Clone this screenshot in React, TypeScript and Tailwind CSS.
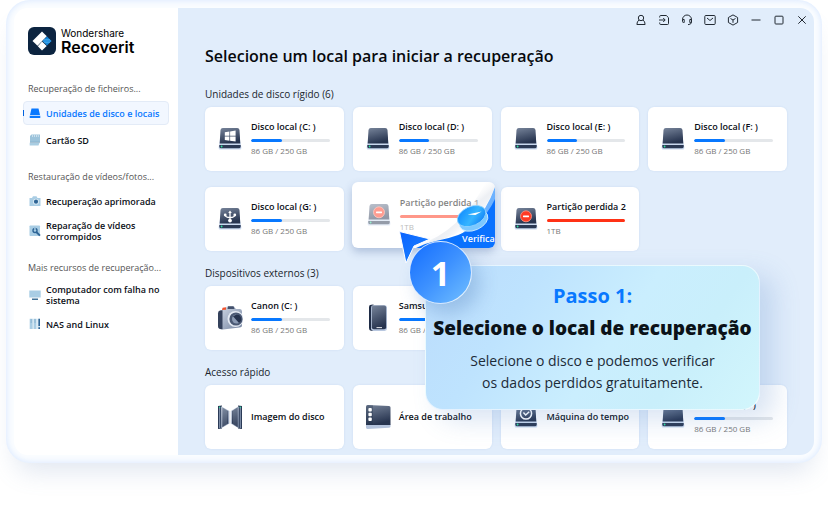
import type { ReactNode } from "react";

const ui = "font-['Open_Sans','Noto_Sans',sans-serif]";

type DriveMark = "windows" | "usb" | "minus" | "clock" | "none";

function Gradients() {
  return (
    <svg className="absolute size-0" aria-hidden="true">
      <defs>
        <linearGradient id="steel" x1="0" y1="0" x2="0.3" y2="1">
          <stop offset="0" stopColor="#77849a" />
          <stop offset="1" stopColor="#27344f" />
        </linearGradient>
        <linearGradient id="silver" x1="0" y1="0" x2="1" y2="1">
          <stop offset="0" stopColor="#d3dbe8" />
          <stop offset="1" stopColor="#7585a1" />
        </linearGradient>
        <linearGradient id="pointer" x1="0" y1="0" x2="1" y2="1">
          <stop offset="0" stopColor="#0a63ff" />
          <stop offset="1" stopColor="#1f86ff" />
        </linearGradient>
        <linearGradient id="disc" x1="0" y1="0" x2="1" y2="1">
          <stop offset="0" stopColor="#0b84ff" />
          <stop offset="0.55" stopColor="#35b5ff" />
          <stop offset="1" stopColor="#0a74f5" />
        </linearGradient>
        <linearGradient id="curl" gradientUnits="userSpaceOnUse" x1="98" y1="18" x2="122" y2="46">
          <stop offset="0.2" stopColor="#ffffff" stopOpacity="0" />
          <stop offset="0.55" stopColor="#dde2ea" stopOpacity="0.5" />
          <stop offset="0.85" stopColor="#ffffff" />
        </linearGradient>
      </defs>
    </svg>
  );
}

function DriveIcon({ mark = "none" }: { mark?: DriveMark }) {
  return (
    <svg viewBox="0 0 24 24" className="size-6 shrink-0" aria-hidden="true">
      <path d="M3.6 3Q3.8 1 5.8 1H18.2Q20.2 1 20.4 3L22.8 17.5Q24.2 22.6 22 22.6H2Q-.2 22.6 1.200 17.500Z" fill="#c9d8ee" />
      <path d="M2.500 3Q2.800 1 4.800 1H19.200Q21.200 1 21.500 3L22.300 16.600H1.700Z" fill="url(#steel)" />
      <path d="M1.300 17.900H22.700V19.800Q22.700 21.200 21.300 21.200H2.700Q1.300 21.200 1.300 19.800Z" fill="#2b3954" />
      <circle cx="3.600" cy="19.500" r="0.900" fill="#2fe0a0" />
      {mark === "windows" && (
        <path d="M6.800 5.200 11.400 4.500V8.800H6.800ZM12.100 4.400 17.600 3.600V8.800H12.100ZM6.800 9.500H11.400V13.700L6.800 13ZM12.100 9.500H17.600V14.600L12.100 13.800Z" fill="#fff" />
      )}
      {mark === "usb" && (
        <g fill="none" stroke="#fff" strokeWidth="1.300">
          <path d="M12 5V14M7.200 8Q7.400 10.500 12 10.500Q16.600 10.500 16.800 8" />
          <path d="M12 3.400 10.200 6H13.800Z" fill="#fff" stroke="none" />
          <circle cx="12" cy="13.600" r="1.900" fill="#fff" stroke="none" />
          <circle cx="7.200" cy="8" r="1.400" fill="#fff" stroke="none" />
          <circle cx="16.800" cy="8" r="1.400" fill="#fff" stroke="none" />
        </g>
      )}
      {mark === "minus" && (
        <g>
          <circle cx="12" cy="9.300" r="5.500" fill="#ff3b24" stroke="#ff9c8c" strokeWidth="0.800" />
          <rect x="9" y="8.500" width="6" height="1.700" rx="0.400" fill="#fff" />
        </g>
      )}
      {mark === "clock" && (
        <g fill="none" stroke="#fff" strokeWidth="1.500">
          <circle cx="12" cy="8.500" r="5.600" />
          <path d="M9.400 7.600 11.700 10 15.200 6.800" />
        </g>
      )}
    </svg>
  );
}

function CameraIcon() {
  return (
    <svg viewBox="0 0 26 26" className="h-[26px] w-[26px] shrink-0" aria-hidden="true">
      <path d="M1 8.500Q1 6 3 5.500L8 4 10 1.500H17L19 4H23Q25 4 25 6.500V20Q25 22.500 22.500 22.500L6 24.500Q1 24.500 1 21Z" fill="url(#silver)" />
      <path d="M1 8.500Q1 6 3 5.500L5.500 5.200V24.300Q1 24.500 1 21Z" fill="#34415b" />
      <path d="M5 5 5.600 2.800 9 2.300V4.700Z" fill="#f0522d" />
      <path d="M10.500 4 11 1.200H16.500L17.600 4Z" fill="#42506c" />
      <circle cx="18.500" cy="14" r="8" fill="#e3e9f2" />
      <circle cx="19" cy="14" r="6.600" fill="#4b5974" />
      <circle cx="19.600" cy="14" r="4.600" fill="#8b9ab3" />
      <path d="M19.600 9.400A4.600 4.600 0 0 1 22 18L16 11.200Z" fill="#26334e" />
    </svg>
  );
}

function ExternalDriveIcon() {
  return (
    <svg viewBox="0 0 24 28" className="h-7 w-6 shrink-0" aria-hidden="true">
      <path d="M3 3Q3 .8 5.200.8L7.500.6V27L5 26.800Q3 26.500 3 24Z" fill="#1e2b45" />
      <rect x="5" y="1.200" width="16" height="25.800" rx="2.400" fill="#b9c8e0" />
      <rect x="5.800" y="1.600" width="14.400" height="23.600" rx="2" fill="url(#steel)" />
      <rect x="10.500" y="23.200" width="5.500" height="0.900" fill="#fff" />
    </svg>
  );
}

function DiskImageIcon() {
  return (
    <svg viewBox="0 0 24 24" className="size-6 shrink-0" aria-hidden="true">
      <path d="M0 1 4 .5V23.500L0 24ZM24 1 20 .5V23.500L24 24Z" fill="#2a3a56" />
      <path d="M3.200 1.200 11.300 6V18.500L3.200 23.200Z" fill="url(#silver)" />
      <path d="M20.800 1.200 12.700 6V18.500L20.800 23.200Z" fill="url(#silver)" />
      <path d="M4.400 2.500 10 6V18.500L4.400 22ZM19.600 2.500 14 6V18.500L19.600 22Z" fill="url(#steel)" />
      <path d="M6 3.500V21M8 5V20M16 5V20M18 3.500V21" stroke="#9eabc0" strokeWidth="0.400" />
      <path d="M1.700 2V23M22.300 2V23" stroke="#b9c9e2" strokeWidth="0.700" />
      <circle cx="1.600" cy="2.200" r="0.700" fill="#2fe0a0" />
      <circle cx="22.300" cy="2.200" r="0.700" fill="#2fe0a0" />
    </svg>
  );
}

function DesktopIcon() {
  return (
    <svg viewBox="0 0 26 26" className="h-[26px] w-[26px] shrink-0" aria-hidden="true">
      <path d="M1 20.500H25.500V22.500Q25.500 23.600 24.300 23.700L2.500 24.900Q1 25 1 23.500Z" fill="#b4c3dc" />
      <path d="M1 3Q1 1 3 1.100L24 2Q25.500 2 25.500 3.500V21H1Z" fill="url(#steel)" />
      <path d="M1 18V3Q1 1 3 1.100L8 1.300V21H1Z" fill="#1f2d47" opacity="0.300" />
      <rect x="3.400" y="4" width="3.400" height="3.400" rx="1" fill="#fff" />
      <rect x="3.400" y="8.800" width="3.400" height="3.400" rx="1" fill="#fff" />
      <rect x="3.400" y="13.600" width="3.400" height="3.400" rx="1" fill="#fff" />
    </svg>
  );
}

function Tile({ icon, name, caption, lost }: { icon: ReactNode; name: string; caption?: string; lost?: boolean }) {
  return (
    <button type="button" className="flex h-16 w-full items-center rounded-md bg-white pr-[14px] pl-3 text-left shadow-[0_0_2px_rgba(70,120,190,0.15)]">
      <span className="flex w-[26px] shrink-0 justify-center">{icon}</span>
      <span className="ml-2 flex min-w-0 grow flex-col">
        <span className="text-[9px] leading-3 font-semibold whitespace-nowrap text-[#0b0f17]">{name}</span>
        {caption && (
          <>
            <span className="mt-[6px] block h-[3px] overflow-hidden rounded-full bg-[#e4e7ea]">
              <span className={lost ? "block h-full w-full bg-[#ff3115]" : "block h-full w-[39%] rounded-full bg-[#0878ff]"} />
            </span>
            <span className="mt-[3px] text-[8px] leading-3 whitespace-nowrap text-[#777]">{caption}</span>
          </>
        )}
      </span>
    </button>
  );
}

function ScanTile() {
  return (
    <div className="relative">
      <button type="button" className="absolute -top-[5px] -left-[1px] flex h-[66px] w-[143px] items-center overflow-hidden rounded-md bg-white pr-[14px] pl-[15px] text-left shadow-[0_4px_9px_rgba(60,90,150,0.3)]">
        <span className="flex w-full items-center opacity-50">
          <DriveIcon mark="minus" />
          <span className="ml-[9px] flex grow flex-col">
            <span className="text-[9px] leading-3 font-semibold whitespace-nowrap">Partição perdida 1</span>
            <span className="mt-[6px] block h-[3px] rounded-full bg-[#ff3115]" />
            <span className="mt-[3px] text-[8px] leading-3 text-[#777]">1TB</span>
          </span>
        </span>
        <svg viewBox="0 0 143 66" className="absolute inset-0 size-full" aria-hidden="true">
          <path d="M143 0V5Q134 28 119 43 104 54 76 62L60 66 66 63Q108 50 134 0Z" fill="url(#curl)" />
          <path d="M143 5Q135 28 119 44L108 53 130 44 143 18Z" fill="#6db2ff" />
          <path d="M143 17Q136 32 123 44 110 54 84 59 74 61 64 66H143Z" fill="#0a72ff" />
          <g transform="rotate(-24 120 35)">
            <ellipse cx="120" cy="39" rx="15" ry="9.500" fill="#7cc8ff" stroke="#d5efff" strokeWidth="0.800" />
            <ellipse cx="120" cy="34" rx="15" ry="9.500" fill="url(#disc)" stroke="#8fd2ff" strokeWidth="0.800" />
            <path d="M117 31 131 34 124 34.500Z" fill="#fff" />
          </g>
        </svg>
        <span className="absolute right-0 bottom-[3px] text-[9px] leading-3 font-semibold text-white">Verifica</span>
      </button>
    </div>
  );
}

function Section({ title, children }: { title: string; children: ReactNode }) {
  return (
    <section className="pt-[14px]">
      <h2 className="mb-[5px] text-[10px] leading-4 text-[#20252d]">{title}</h2>
      <div className="grid grid-cols-4 gap-x-[9px] gap-y-4">{children}</div>
    </section>
  );
}

function NavLabel({ children }: { children: ReactNode }) {
  return <h3 className="pl-[5px] text-[9px] leading-3 whitespace-nowrap text-[#555]">{children}</h3>;
}

function NavItem({ icon, active, children }: { icon: ReactNode; active?: boolean; children: ReactNode }) {
  return (
    <button
      type="button"
      className={
        active
          ? "relative flex h-6 w-full items-center gap-[5px] rounded border border-[#e3ebf7] bg-[#f2f7ff] pl-[5px] text-left text-[9px] leading-[11px] font-semibold text-[#0878ff]"
          : "flex min-h-6 w-full items-center gap-[5px] pl-[6px] text-left text-[9px] leading-[11px] font-semibold text-[#0b0f17]"
      }
    >
      {active && <span className="absolute top-2 -left-px h-[6px] w-px bg-[#0062df]" />}
      <svg viewBox="0 0 12 12" className="size-3 shrink-0" aria-hidden="true">
        {icon}
      </svg>
      <span>{children}</span>
    </button>
  );
}

function Sidebar() {
  return (
    <aside className="flex w-[164px] shrink-0 flex-col bg-white pt-[19px] pr-[9px] pl-[9px]">
      <div className="flex items-center gap-[5px] pl-[5px] font-['Inter',sans-serif]">
        <svg viewBox="0 0 28 28" className="size-7 shrink-0" aria-hidden="true">
          <rect width="28" height="28" rx="6" fill="#0c2440" />
          <path d="M14 4.500 18.800 9.300 9.500 18.700 4.500 13.900Z" fill="#fff" />
          <path d="M14 14.500 18.700 19 14 23.500 9.800 19.200Z" fill="#fff" />
          <path d="M19 9.500 23.500 14 19 18.500 14.500 14Z" fill="#1688dc" />
          <path d="M16 12.500H22M14.800 14H23.200M16 15.500H22" stroke="#55b6f4" strokeWidth="0.600" />
        </svg>
        <div className="text-black">
          <p className="text-[10px] leading-3">Wondershare</p>
          <p className="text-[16px] leading-4 font-semibold">Recoverit</p>
        </div>
      </div>
      <nav className="mt-[28px]">
        <NavLabel>Recuperação de ficheiros...</NavLabel>
        <div className="mt-[6px] flex flex-col gap-[3px]">
          <NavItem active icon={<path d="M2.500 1.500H9.500L11 8H1ZM.7 8.700H11.300V11H.7Z" fill="#0878ff" />}>
            Unidades de disco e locais
          </NavItem>
          <NavItem
            icon={
              <>
                <path d="M2.500.5H11V8H1V2Z" fill="#9cc3db" />
                <path d="M.7 8.700H10.500L9.500 11.500H.7Z" fill="#a9cde2" />
                <path d="M3.500 1.200V2.800M5.500 1.200V2.800M7.500 1.200V2.800M9.300 1.200V2.800" stroke="#fff" strokeWidth="0.600" />
                <path d="M1 8.300H11" stroke="#5a8aac" strokeWidth="0.600" />
              </>
            }
          >
            Cartão SD
          </NavItem>
        </div>
        <div className="mt-[19px]">
          <NavLabel>Restauração de vídeos/fotos...</NavLabel>
        </div>
        <div className="mt-[6px] flex flex-col gap-[6px]">
          <NavItem
            icon={
              <>
                <path d="M.5 3H3L4 1.200H7.500L8.500 3H11.500V11H.5Z" fill="#a9cde4" />
                <circle cx="7" cy="6.700" r="2.900" fill="#e3f0f8" />
                <circle cx="7" cy="6.700" r="2.100" fill="#2f6596" />
              </>
            }
          >
            Recuperação aprimorada
          </NavItem>
          <NavItem
            icon={
              <>
                <rect x="0.500" y="0.500" width="10.500" height="10.500" rx="0.800" fill="#a9cde4" />
                <circle cx="6" cy="5.500" r="2" fill="none" stroke="#2f6596" strokeWidth="1.400" />
                <path d="M5 3 7 2.500 6 5.500Z" fill="#a9cde4" />
                <path d="M7.300 7 11 10.700" stroke="#2f6596" strokeWidth="1.900" />
              </>
            }
          >
            Reparação de vídeos corrompidos
          </NavItem>
        </div>
        <div className="mt-[19px]">
          <NavLabel>Mais recursos de recuperação...</NavLabel>
        </div>
        <div className="mt-[9px] flex flex-col gap-[5px]">
          <NavItem
            icon={
              <>
                <path d="M.3 1.500H11.700V8.500H.3Z" fill="#a9cde4" />
                <path d="M3 9.500H9V11H3Z" fill="#427398" />
              </>
            }
          >
            Computador com falha no sistema
          </NavItem>
          <NavItem
            icon={
              <>
                <path d="M.7.700H3.700V11H.7ZM4.500.700H7.500V11H4.500Z" fill="#a9cde4" />
                <path d="M8.300.700H11V11H8.300Z" fill="#d0e4f1" />
                <path d="M2.200 1V5M6 1V5" stroke="#7fa9c7" strokeWidth="0.700" />
                <path d="M10.200.7V8M10.200 9.200V11" stroke="#2f6596" strokeWidth="1.600" />
              </>
            }
          >
            NAS and Linux
          </NavItem>
        </div>
      </nav>
    </aside>
  );
}

const windowControls: { label: string; art: ReactNode }[] = [
  { label: "Conta", art: <><circle cx="6" cy="4" r="2.700" /><path d="M4 6Q1.900 7.500 1.900 10.500H10.100Q10.100 7.500 8 6" /></> },
  { label: "Entrar", art: <><path d="M1.700 3.500V2.500Q1.700 1.500 2.700 1.500H8.300L10.500 3.700V9.500Q10.500 10.500 9.500 10.500H2.700Q1.700 10.500 1.700 9.500V8.500M1 6H7M5.200 4 7.200 6 5.200 8" /></> },
  { label: "Suporte", art: <><path d="M1.500 5.500A4.500 4.500 0 0 1 10.500 5.500V8Q10.500 10.500 7 10.700" /><path d="M1.500 5.500H3.200V8.500H2.500Q1.500 8.500 1.500 7.500ZM10.500 5.500H8.800V8.500H9.500Q10.500 8.500 10.500 7.500Z" /></> },
  { label: "Mensagens", art: <><rect x="0.800" y="1.500" width="10.400" height="9" rx="1" /><path d="M3 4 6 6.500 9 4" /></> },
  { label: "Produtos", art: <><path d="M6 .9 10.600 3.500V8.500L6 11.100 1.400 8.500V3.500Z" /><path d="M3.500 4.500 6 6 8.500 4.500M6 6V8.800" /></> },
  { label: "Minimizar", art: <path d="M1.500 6H10.500" /> },
  { label: "Maximizar", art: <rect x="2" y="2.200" width="8" height="7.800" rx="0.800" /> },
  { label: "Fechar", art: <path d="M2.300 2.300 9.700 9.700M9.700 2.300 2.300 9.700" /> },
];

function TitleBar() {
  return (
    <div className="flex h-6 items-center justify-end gap-[11px] pr-[6px]">
      {windowControls.map(({ label, art }) => (
        <button key={label} type="button" aria-label={label}>
          <svg viewBox="0 0 12 12" className="block size-3" fill="none" stroke="#222a33" strokeWidth="1" strokeLinejoin="round">
            {art}
          </svg>
        </button>
      ))}
    </div>
  );
}

function StepCallout() {
  return (
    <div className="absolute top-[265px] right-[68px] w-[335px]">
      <div className="rounded-[18px] border border-white/60 bg-[linear-gradient(125deg,#bbdcfc_0%,#bee3fe_28%,#caeefe_55%,#c9effb_75%,#d2f6fc_100%)] pt-[18px] pb-[15px] text-center shadow-[14px_10px_26px_rgba(80,130,200,0.22)]">
        <p className="text-[20px] leading-6 font-bold text-[#0878ff]">Passo 1:</p>
        <h2 className="mt-2 text-[19px] leading-6 font-extrabold whitespace-nowrap text-[#0b1218]">Selecione o local de recuperação</h2>
        <p className="mt-[10px] text-[14px] leading-[22px] text-[#1c2b38]">
          Selecione o disco e podemos verificar
          <br />
          os dados perdidos gratuitamente.
        </p>
      </div>
      <svg viewBox="0 0 36 38" className="absolute -top-[36px] -left-[27px] h-[38px] w-9" aria-hidden="true">
        <path d="M1.500 2.500 32 10 16 17 8 34Z" fill="url(#pointer)" stroke="#fff" strokeWidth="1" />
      </svg>
      <div className="absolute -top-6 -left-4 flex size-[63px] items-center justify-center rounded-full border border-white/80 bg-[linear-gradient(135deg,#126cff_0%,#3d91ff_50%,#72c0ff_100%)] text-[34px] leading-none font-bold text-white shadow-[8px_10px_18px_rgba(60,110,180,0.28)]">
        1
      </div>
    </div>
  );
}

export default function App() {
  return (
    <div className={`relative w-full overflow-hidden bg-white px-[6px] pb-[46px] ${ui}`}>
      <Gradients />
      <div className="rounded-[24px] bg-[#fbfdff] p-2 shadow-[inset_0_0_7px_rgba(190,216,255,0.65),0_18px_26px_-10px_rgba(100,130,180,0.2)]">
        <div className="flex h-[447px] overflow-hidden rounded-[14px]">
          <Sidebar />
          <main className="min-w-0 grow bg-[#e1edfb]">
            <TitleBar />
            <div className="px-[27px] pt-3">
              <h1 className="mb-1 text-[16px] leading-6 font-semibold text-[#07090d]">Selecione um local para iniciar a recuperação</h1>
              <Section title="Unidades de disco rígido (6)">
                <Tile icon={<DriveIcon mark="windows" />} name="Disco local (C: )" caption="86 GB / 250 GB" />
                <Tile icon={<DriveIcon />} name="Disco local (D: )" caption="86 GB / 250 GB" />
                <Tile icon={<DriveIcon />} name="Disco local (E: )" caption="86 GB / 250 GB" />
                <Tile icon={<DriveIcon />} name="Disco local (F: )" caption="86 GB / 250 GB" />
                <Tile icon={<DriveIcon mark="usb" />} name="Disco local (G: )" caption="86 GB / 250 GB" />
                <ScanTile />
                <Tile icon={<DriveIcon mark="minus" />} name="Partição perdida 2" caption="1TB" lost />
              </Section>
              <Section title="Dispositivos externos (3)">
                <Tile icon={<CameraIcon />} name="Canon (C: )" caption="86 GB / 250 GB" />
                <Tile icon={<ExternalDriveIcon />} name="Samsung" caption="86 GB / 250 GB" />
              </Section>
              <Section title="Acesso rápido">
                <Tile icon={<DiskImageIcon />} name="Imagem do disco" />
                <Tile icon={<DesktopIcon />} name="Área de trabalho" />
                <Tile icon={<DriveIcon mark="clock" />} name="Máquina do tempo" />
                <Tile icon={<DriveIcon />} name="Disco local (I: )" caption="86 GB / 250 GB" />
              </Section>
            </div>
          </main>
        </div>
      </div>
      <StepCallout />
    </div>
  );
}
